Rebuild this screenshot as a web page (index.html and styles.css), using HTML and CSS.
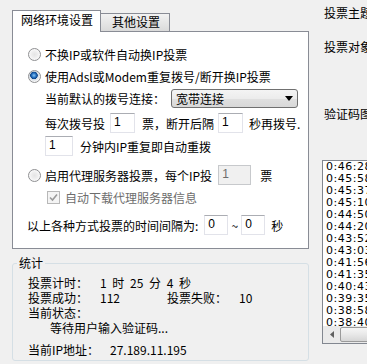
FILE: index.html
```html
<!DOCTYPE html>
<html>
<head>
    <title>投票设置</title>
    <link rel="stylesheet" href="styles.css">
</head>
<body>
    <div class="window">
        <div class="left">
            <div class="tabs">
                <div class="tab active">网络环境设置</div>
                <div class="tab">其他设置</div>
            </div>
            <div class="panel">
                <div class="row r1">
                    <span class="radio"></span>
                    <span>不换IP或软件自动换IP投票</span>
                </div>
                <div class="row r2">
                    <span class="radio checked"></span>
                    <span>使用Adsl或Modem重复拨号/断开换IP投票</span>
                </div>
                <div class="row r3 indent">
                    <span>当前默认的拨号连接：</span>
                    <div class="combo">
                        <span>宽带连接</span>
                        <svg width="8" height="5" viewBox="0 0 8 5"><path d="M0 0h8L4 5z" fill="#000"/></svg>
                    </div>
                </div>
                <div class="row r4 indent">
                    <span>每次拨号投</span>
                    <span class="edit w25 gap5">1</span>
                    <span class="gap7">票，断开后隔</span>
                    <span class="edit w25 gap4">1</span>
                    <span class="gap6">秒再拨号.</span>
                </div>
                <div class="row r5 indent">
                    <span class="edit w28">1</span>
                    <span class="gap7">分钟内IP重复即自动重拨</span>
                </div>
                <div class="row r6">
                    <span class="radio"></span>
                    <span>启用代理服务器投票，每个IP投</span>
                    <span class="edit w33 gap6 disabled">1</span>
                    <span class="gap9">票</span>
                </div>
                <div class="row r7 indent">
                    <span class="check">
                        <svg width="9" height="9" viewBox="0 0 9 9"><path d="M1 4.5l2.5 2.5L8 1.5" fill="none" stroke="#9a9a9a" stroke-width="1.6"/></svg>
                    </span>
                    <span class="grey">自动下载代理服务器信息</span>
                </div>
                <div class="row r8">
                    <span>以上各种方式投票的时间间隔为:</span>
                    <span class="edit w24 gap6">0</span>
                    <span class="tilde">~</span>
                    <span class="edit w24">0</span>
                    <span class="gap6">秒</span>
                </div>
            </div>

            <fieldset class="stats">
                <legend>统计</legend>
                <div class="stats-body">
                    <div class="srow">
                        <span class="slabel">投票计时：</span>
                        <span class="sval">1 时 25 分 4 秒</span>
                    </div>
                    <div class="srow">
                        <span class="slabel">投票成功：</span>
                        <span class="sval num">112</span>
                        <span class="slabel">投票失败：</span>
                        <span class="sval">10</span>
                    </div>
                    <div class="srow">当前状态：</div>
                    <div class="srow status">等待用户输入验证码...</div>
                    <div class="srow ip">
                        <span class="slabel">当前IP地址：</span>
                        <span class="sval">27.189.11.195</span>
                    </div>
                </div>
            </fieldset>
        </div>

        <div class="right">
            <div class="label l1">投票主题</div>
            <div class="label l2">投票对象</div>
            <div class="label l3">验证码图</div>
            <div class="listbox">
                <div class="items">
                    <div>0:46:28</div>
                    <div>0:45:58</div>
                    <div>0:45:37</div>
                    <div>0:45:10</div>
                    <div>0:44:50</div>
                    <div>0:44:20</div>
                    <div>0:43:52</div>
                    <div>0:43:03</div>
                    <div>0:41:56</div>
                    <div>0:41:35</div>
                    <div>0:40:43</div>
                    <div>0:39:35</div>
                    <div>0:38:58</div>
                    <div>0:38:40</div>
                </div>
                <div class="hscroll">
                    <div class="arrow">
                        <svg width="4" height="7" viewBox="0 0 4 7"><path d="M4 0v7L0 3.5z" fill="#606060"/></svg>
                    </div>
                    <div class="thumb"></div>
                </div>
            </div>
        </div>
    </div>
</body>
</html>
```

FILE: styles.css
```css
html, body {
    margin: 0;
    padding: 0;
}
body {
    width: 367px;
    height: 364px;
    overflow: hidden;
    background-color: #f0f0f0;
    font-family: "Noto Sans CJK SC", "Liberation Sans", sans-serif;
    font-size: 12px;
    color: #000;
}
.window {
    display: flex;
    width: 500px;
}
.left {
    width: 297px;
    margin-left: 12px;
    flex: none;
}

/* tabs */
.tabs {
    display: flex;
    align-items: flex-end;
    margin-top: 10px;
    height: 21px;
}
.tab {
    box-sizing: border-box;
    height: 18px;
    line-height: 16px;
    padding: 0 9px 0 11px;
    border: 1px solid #898c95;
    border-bottom: none;
    border-left: none;
    background: linear-gradient(#f2f2f2, #e6e6e6 50%, #dadada);
}
.tab.active {
    position: relative;
    z-index: 1;
    height: 22px;
    line-height: 18px;
    margin-bottom: -1px;
    padding: 0 7px 0 8px;
    border-left: 1px solid #898c95;
    background: #fff;
}

.panel {
    box-sizing: border-box;
    height: 218px;
    padding: 11px 0 0 14px;
    border: 1px solid #898c95;
    background: #fff;
}
.row {
    display: flex;
    align-items: center;
    height: 22px;
    white-space: nowrap;
}
.row .radio {
    margin-left: 1px;
    margin-right: 4px;
}
.indent {
    padding-left: 18px;
}
.r4 { margin-top: 3px; }
.r5 { margin-top: 1px; }
.r6 { margin-top: 7px; }
.r8 { margin-top: 6px; }

.radio {
    box-sizing: border-box;
    display: inline-block;
    width: 13px;
    height: 13px;
    border-radius: 50%;
    border: 1px solid #8f9092;
    background: radial-gradient(circle at 50% 50%, #e4e4e4 0, #eeeeee 3px, #fbfbfb 6px);
}
.radio.checked {
    background: radial-gradient(circle at 45% 40%, #8cc8f4 0, #2c77c6 2px, #0b4387 3.5px, #cfd8e2 4px, #f6f6f6 6px);
}
.check {
    box-sizing: border-box;
    display: inline-flex;
    align-items: center;
    justify-content: center;
    width: 13px;
    height: 13px;
    margin: 0 5px 0 2px;
    border: 1px solid #b8b8b8;
    background: #f4f4f4;
}
.grey {
    color: #6d6d6d;
}

.combo {
    box-sizing: border-box;
    display: flex;
    align-items: center;
    justify-content: space-between;
    width: 127px;
    height: 19px;
    margin-left: 6px;
    padding: 0 4px 0 4px;
    border: 1px solid #707070;
    border-radius: 3px;
    background: linear-gradient(#f4f4f4, #ececec 50%, #e0e0e0 51%, #d8d8d8);
}

.edit {
    box-sizing: border-box;
    display: inline-block;
    height: 20px;
    line-height: 17px;
    padding-left: 3px;
    border: 1px solid #e2e3ea;
    border-top-color: #abadb3;
    background: #fff;
    font-family: "Liberation Sans", sans-serif;
}
.edit.disabled {
    background: #f0f0f0;
    color: #6d6d6d;
    border-color: #c7c9cc;
}
.w24 { width: 24px; }
.w25 { width: 25px; }
.w28 { width: 28px; }
.w33 { width: 33px; }
.gap4 { margin-left: 4px; }
.gap5 { margin-left: 5px; }
.gap6 { margin-left: 6px; }
.gap7 { margin-left: 7px; }
.gap9 { margin-left: 9px; }
.tilde {
    width: 13px;
    text-align: center;
}

/* stats group */
.stats {
    margin: 7px 0 0 0;
    padding: 0;
    border: 1px solid #d5dfe5;
    border-radius: 3px;
}
.stats legend {
    margin-left: 4px;
    padding: 0 2px;
    line-height: 14px;
}
.stats-body {
    padding: 6px 0 2px 15px;
}
.srow {
    display: flex;
    height: 15px;
    line-height: 14px;
    white-space: nowrap;
}
.slabel {
    width: 72px;
}
.sval {
    word-spacing: 3px;
}
.sval.num {
    width: 67px;
}
.status {
    padding-left: 22px;
}
.ip {
    margin-top: 7px;
}
.ip .slabel {
    width: 82px;
}

/* right column */
.right {
    flex: none;
    width: 150px;
    margin-left: 13px;
    padding-top: 6px;
}
.label {
    line-height: 14px;
    white-space: nowrap;
    margin-left: 2px;
}
.l2 { margin-top: 20px; }
.l3 { margin-top: 53px; }
.listbox {
    box-sizing: border-box;
    display: flex;
    flex-direction: column;
    width: 130px;
    height: 184px;
    margin-top: 39px;
    border: 1px solid #828790;
    background: #fff;
}
.items {
    flex: 1;
    min-height: 0;
    overflow: hidden;
    padding-left: 3px;
    font-family: "DejaVu Sans", sans-serif;
    font-size: 11px;
    letter-spacing: 0.5px;
    line-height: 12px;
}
.hscroll {
    flex: none;
    display: flex;
    height: 17px;
    background: #eaeaea;
}
.arrow {
    display: flex;
    align-items: center;
    justify-content: center;
    width: 17px;
}
.thumb {
    flex: 1;
    margin: 1px 0;
    border: 1px solid #9a9a9a;
    border-radius: 2px;
    background: linear-gradient(#f6f6f6, #e8e8e8 50%, #d6d6d6);
}
```
